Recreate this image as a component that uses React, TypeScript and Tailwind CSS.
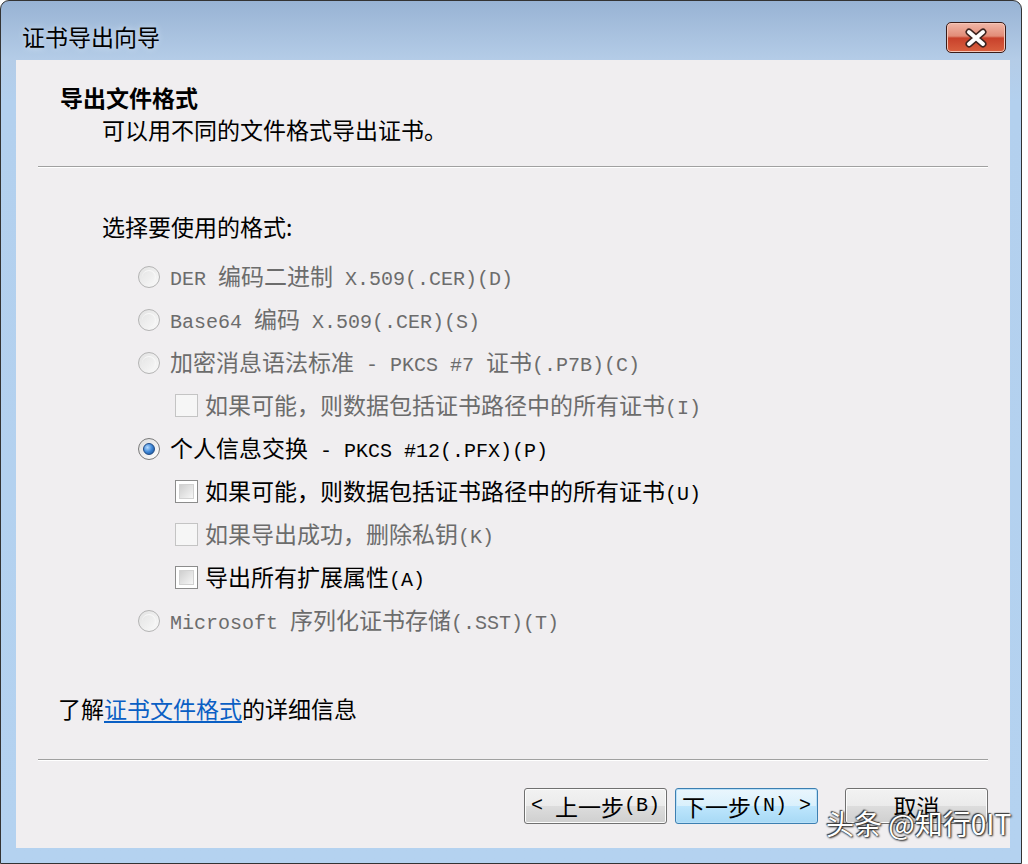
import React from "react";

const CJK = /[\u3000-\u303f\u3400-\u9fff\uff00-\uffef]/;

// split a label into CJK runs (full width) and latin runs (SimSun-like half width mono)
function Mixed({ text }: { text: string }) {
  const runs: { cjk: boolean; s: string }[] = [];
  for (const ch of text) {
    const cjk = CJK.test(ch);
    const last = runs[runs.length - 1];
    if (last && last.cjk === cjk) last.s += ch;
    else runs.push({ cjk, s: ch });
  }
  return (
    <>
      {runs.map((r, i) =>
        r.cjk ? (
          <span key={i} className="text-[23px] font-['Noto_Sans_CJK_SC',sans-serif]">
            {r.s}
          </span>
        ) : (
          <span key={i} className="text-[20px] font-['Liberation_Mono','Noto_Sans_CJK_SC',monospace] whitespace-pre">
            {r.s}
          </span>
        )
      )}
    </>
  );
}

function Radio({ checked, disabled }: { checked?: boolean; disabled?: boolean }) {
  return (
    <span
      className={`flex h-[22px] w-[22px] shrink-0 items-center justify-center rounded-full border ${
        disabled
          ? "border-[#b4b4b4] bg-linear-to-br from-[#e2e2e2] to-[#fafafa]"
          : "border-[#7b7b7b] bg-linear-to-br from-[#dcdcdc] to-[#ffffff]"
      }`}
    >
      {checked && (
        <span className="h-[12px] w-[12px] rounded-full border border-[#1d4a86] bg-[radial-gradient(circle_at_35%_35%,#b6dcff,#3d86d6_50%,#174a8c)]" />
      )}
      {disabled && !checked && (
        <span className="h-[14px] w-[14px] rounded-full border-t border-r border-[#f8f8f8]" />
      )}
    </span>
  );
}

function Check({ disabled }: { disabled?: boolean }) {
  return (
    <span
      className={`flex h-[23px] w-[23px] shrink-0 items-center justify-center border ${
        disabled ? "border-[#c4c4c4] bg-[#f6f6f6]" : "border-[#8c8c8c] bg-white"
      }`}
    >
      {!disabled && (
        <span className="h-[15px] w-[15px] border border-[#d2d2d2] bg-linear-to-br from-[#cfcfcf] to-[#f7f7f7]" />
      )}
    </span>
  );
}

type Opt = { kind: "radio" | "check"; text: string; checked?: boolean; disabled?: boolean };

const options: Opt[] = [
  { kind: "radio", text: "DER 编码二进制 X.509(.CER)(D)", disabled: true },
  { kind: "radio", text: "Base64 编码 X.509(.CER)(S)", disabled: true },
  { kind: "radio", text: "加密消息语法标准 - PKCS #7 证书(.P7B)(C)", disabled: true },
  { kind: "check", text: "如果可能，则数据包括证书路径中的所有证书(I)", disabled: true },
  { kind: "radio", text: "个人信息交换 - PKCS #12(.PFX)(P)", checked: true },
  { kind: "check", text: "如果可能，则数据包括证书路径中的所有证书(U)" },
  { kind: "check", text: "如果导出成功，删除私钥(K)", disabled: true },
  { kind: "check", text: "导出所有扩展属性(A)" },
  { kind: "radio", text: "Microsoft 序列化证书存储(.SST)(T)", disabled: true },
];

function WinButton({ label, focused }: { label: string; focused?: boolean }) {
  return (
    <button
      className={`flex h-[36px] w-[143px] items-center justify-center rounded-[3px] border text-black ${
        focused
          ? "border-[#3c7fb1] bg-[linear-gradient(to_bottom,#eaf6fd_0%,#d9f0fc_50%,#bee6fd_50%,#a7d9f5_100%)] shadow-[inset_0_0_0_1px_#b9e0f8]"
          : "border-[#707070] bg-[linear-gradient(to_bottom,#f2f2f2_0%,#ebebeb_50%,#dddddd_50%,#cfcfcf_100%)] shadow-[inset_0_0_0_1px_#fcfcfc]"
      }`}
    >
      <Mixed text={label} />
    </button>
  );
}

export default function App() {
  return (
    <div className="relative h-[864px] w-[1028px] bg-white">
      <div className="flex h-[864px] w-[1022px] flex-col rounded-t-[9px] border border-[#333] bg-[linear-gradient(to_bottom,#98b3d4_0px,#b4cce7_58px,#b3d0ee_100px,#b4d2f0_100%)]">
        {/* title bar */}
        <div className="flex h-[59px] shrink-0 items-start justify-between pl-[21px] pr-[15px]">
          <span className="mt-[19px] text-[23px] leading-[32px] text-black font-['Noto_Sans_CJK_SC',sans-serif] [text-shadow:0_0_6px_#dbe8f6]">
            证书导出向导
          </span>
          <span className="mt-[21px] flex h-[31px] w-[60px] items-center justify-center rounded-[5px] border border-[#3a1c18] bg-[linear-gradient(to_bottom,#f0b7a8_0%,#e28c78_45%,#c8412b_52%,#d9603f_100%)] shadow-[inset_0_0_0_1px_#f5c6b8]">
            <svg width="26" height="20" viewBox="0 0 26 20">
              <path d="M6 4 L20 16 M20 4 L6 16" stroke="#3d2420" strokeWidth="7" strokeLinecap="round" />
              <path d="M6 4 L20 16 M20 4 L6 16" stroke="#ffffff" strokeWidth="4" strokeLinecap="round" />
            </svg>
          </span>
        </div>

        {/* client area */}
        <div className="mb-[15px] ml-[15px] mr-[11px] flex flex-1 flex-col bg-[#f0eef0] text-black">
          <div className="pl-[44px] pt-[21px]">
            <div className="h-[32px] text-[23px] font-bold leading-[32px] font-['Noto_Sans_CJK_SC',sans-serif]">
              导出文件格式
            </div>
            <div className="h-[32px] pl-[42px] text-[23px] leading-[32px] font-['Noto_Sans_CJK_SC',sans-serif]">
              可以用不同的文件格式导出证书。
            </div>
          </div>
          <div className="mx-[22px] mt-[21px] border-t border-b border-t-[#a0a0a0] border-b-white" />

          <div className="mt-[42px] h-[32px] pl-[86px] text-[23px] leading-[32px] font-['Noto_Sans_CJK_SC',sans-serif]">
            选择要使用的格式:
          </div>

          <div className="mt-[13px] flex flex-col">
            {options.map((o, i) => (
              <div
                key={i}
                className={`flex h-[43px] items-center ${
                  o.kind === "radio" ? "gap-[10px] pl-[122px]" : "gap-[7px] pl-[159px]"
                } ${o.disabled ? "text-[#6c6c6c]" : "text-black"}`}
              >
                {o.kind === "radio" ? <Radio checked={o.checked} disabled={o.disabled} /> : <Check disabled={o.disabled} />}
                <span className="leading-none">
                  <Mixed text={o.text} />
                </span>
              </div>
            ))}
          </div>

          <div className="mt-[50px] h-[32px] pl-[42px] text-[23px] leading-[32px] font-['Noto_Sans_CJK_SC',sans-serif]">
            了解<span className="text-[#0a5fc4] underline underline-offset-[3px]">证书文件格式</span>的详细信息
          </div>

          <div className="mx-[22px] mt-[35px] border-t border-b border-t-[#a0a0a0] border-b-white" />

          <div className="mt-[27px] flex items-center justify-end pr-[22px]">
            <WinButton label="< 上一步(B)" />
            <div className="ml-[8px]">
              <WinButton label="下一步(N) >" focused />
            </div>
            <div className="ml-[27px]">
              <WinButton label="取消" />
            </div>
          </div>
        </div>
      </div>

      {/* watermark */}
      <div className="absolute left-[826px] top-[804px] text-[28px] leading-[38px] text-white font-['Noto_Sans_CJK_SC',sans-serif] [text-shadow:0_0_2px_#222,1px_1px_2px_#222,-1px_-1px_1px_#444]">
        头条 @知行0IT
      </div>
    </div>
  );
}
